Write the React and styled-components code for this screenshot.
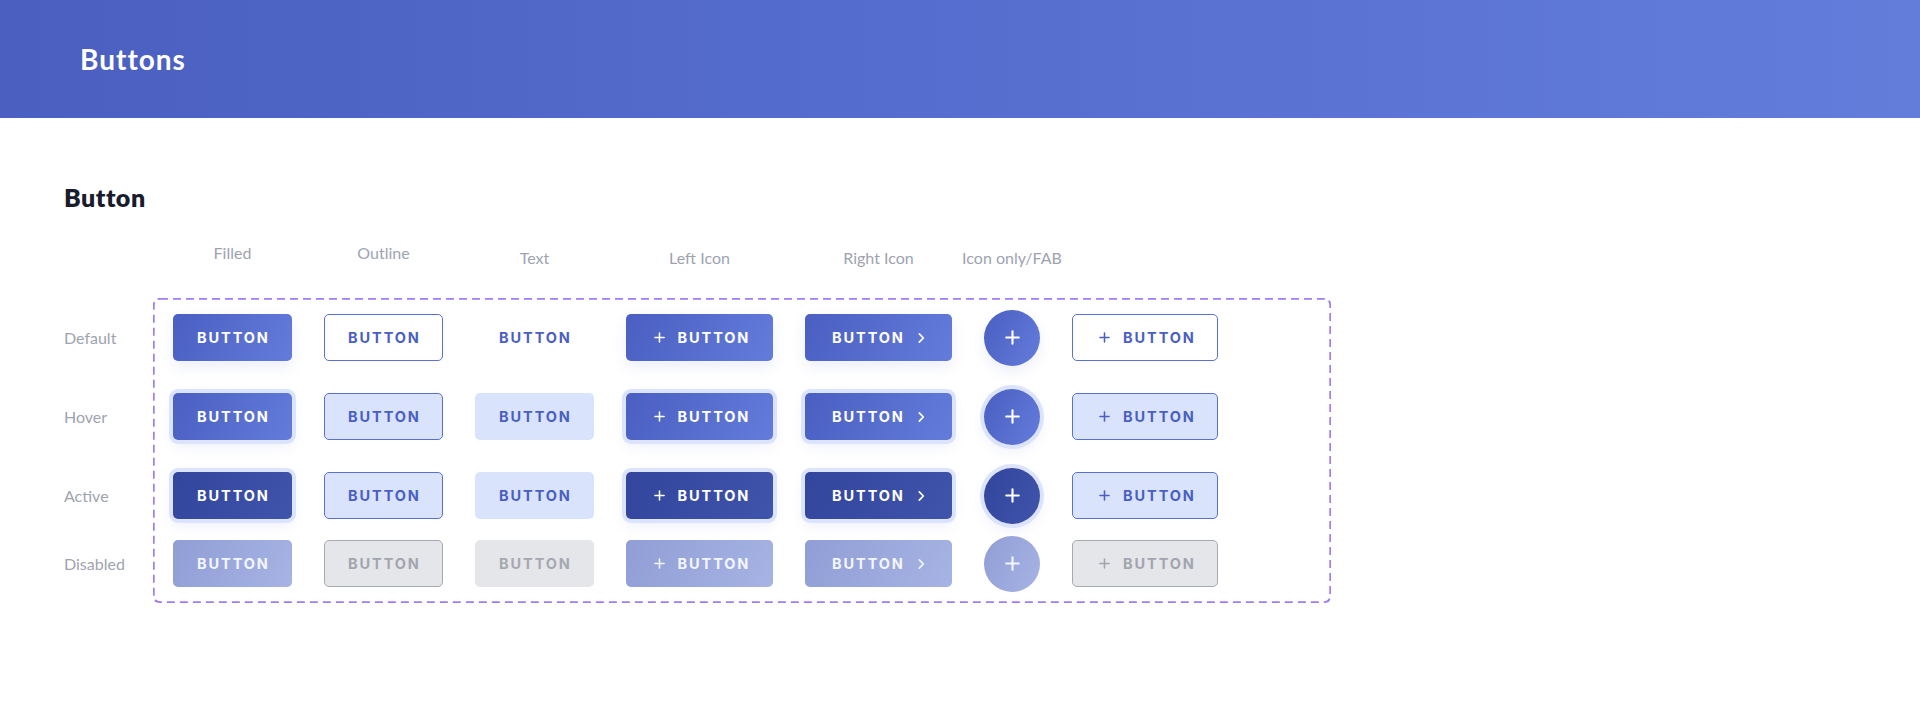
import React from "react";
import styled, { createGlobalStyle, css } from "styled-components";

const GlobalStyle = createGlobalStyle`
  * { box-sizing: border-box; }
  body {
    margin: 0;
    background: #ffffff;
    font-family: Lato, "Open Sans", sans-serif;
  }
`;

const PRIMARY = "linear-gradient(115deg, #4a5fc1 0%, #637cdb 100%)";
const PRIMARY_DARK = "linear-gradient(115deg, #33459c 0%, #3f54ab 100%)";
const PRIMARY_OFF = "linear-gradient(115deg, #909ed6 0%, #a6b3e3 100%)";
const SOFT = "#d9e3fb";
const RING = "0 0 0 4px #dbe4fc, 0 6px 14px rgba(74, 95, 193, 0.1)";
const LIFT = "0 6px 14px rgba(74, 95, 193, 0.1)";
const TRACK = 1.9;

const looks = {
  filled: {
    default: css`
      background: ${PRIMARY};
      color: #fff;
      box-shadow: ${LIFT};
    `,
    hover: css`
      background: ${PRIMARY};
      color: #fff;
      box-shadow: ${RING};
    `,
    active: css`
      background: ${PRIMARY_DARK};
      color: #fff;
      box-shadow: ${RING};
    `,
    disabled: css`
      background: ${PRIMARY_OFF};
      color: #f4f6ff;
    `,
  },
  outline: {
    default: css`
      background: #fff;
      color: #4a5fc1;
      border: 1.5px solid #5a70d3;
    `,
    hover: css`
      background: ${SOFT};
      color: #4a5fc1;
      border: 1.5px solid #5a70d3;
    `,
    active: css`
      background: ${SOFT};
      color: #4a5fc1;
      border: 1.5px solid #5a70d3;
    `,
    disabled: css`
      background: #e5e6ea;
      color: #a2a5ae;
      border: 1.5px solid #a6a9b1;
    `,
  },
  text: {
    default: css`
      background: transparent;
      color: #4a5fc1;
    `,
    hover: css`
      background: ${SOFT};
      color: #4a5fc1;
    `,
    active: css`
      background: ${SOFT};
      color: #4a5fc1;
    `,
    disabled: css`
      background: #e5e6ea;
      color: #a5a8b0;
    `,
  },
};

const columns = [
  { key: "filled", title: "Filled", kind: "filled", width: 119, lift: 0 },
  { key: "outline", title: "Outline", kind: "outline", width: 119, lift: 0 },
  { key: "text", title: "Text", kind: "text", width: 119, lift: 5 },
  { key: "left", title: "Left Icon", kind: "filled", icon: "left", width: 147, lift: 5 },
  { key: "right", title: "Right Icon", kind: "filled", icon: "right", width: 147, lift: 5 },
  { key: "fab", title: "Icon only/FAB", kind: "filled", icon: "fab", width: 56, lift: 5 },
  { key: "outlineIcon", title: "", kind: "outline", icon: "left", width: 146, lift: 5 },
];

const rows = [
  { state: "default", label: "Default", gap: 32 },
  { state: "hover", label: "Hover", gap: 32 },
  { state: "active", label: "Active", gap: 21 },
  { state: "disabled", label: "Disabled", gap: 0 },
];

function PlusIcon({ size = 11 }) {
  return (
    <svg width={size} height={size} viewBox="0 0 12 12" fill="none">
      <path d="M6 1v10M1 6h10" stroke="currentColor" strokeWidth="1.7" strokeLinecap="round" />
    </svg>
  );
}

function ChevronIcon() {
  return (
    <svg width="8" height="12" viewBox="0 0 8 12" fill="none">
      <path d="M2.3 1.8L6.3 6l-4 4.2" stroke="currentColor" strokeWidth="1.7" strokeLinecap="round" strokeLinejoin="round" />
    </svg>
  );
}

function DemoButton({ column, state }) {
  const { kind, icon, width } = column;
  if (icon === "fab") {
    return (
      <Fab $kind={kind} $state={state}>
        <PlusIcon size={15} />
      </Fab>
    );
  }
  return (
    <Btn $kind={kind} $state={state} $width={width} $icon={icon}>
      {icon === "left" && <PlusIcon />}
      <Label>BUTTON</Label>
      {icon === "right" && <ChevronIcon />}
    </Btn>
  );
}

export default function App() {
  return (
    <>
      <GlobalStyle />
      <Header>
        <HeaderTitle>Buttons</HeaderTitle>
      </Header>
      <Main>
        <SectionTitle>Button</SectionTitle>
        <ColumnHeads>
          {columns.map((c) => (
            <ColumnHead key={c.key} $width={c.width} $lift={c.lift}>
              {c.title}
            </ColumnHead>
          ))}
        </ColumnHeads>
        <Board>
          <RowLabels>
            {rows.map((r) => (
              <RowLabel key={r.state} $gap={r.gap}>
                {r.label}
              </RowLabel>
            ))}
          </RowLabels>
          <DashedBox>
            {rows.map((r) => (
              <ButtonRow key={r.state} $gap={r.gap}>
                {columns.map((c) => (
                  <DemoButton key={c.key} column={c} state={r.state} />
                ))}
              </ButtonRow>
            ))}
          </DashedBox>
        </Board>
      </Main>
    </>
  );
}

const Header = styled.header`
  height: 118px;
  display: flex;
  align-items: center;
  padding-left: 80px;
  background: linear-gradient(90deg, #4a5fc0 0%, #5770d0 55%, #637ddb 100%);
`;

const HeaderTitle = styled.h1`
  margin: 0;
  color: #fff;
  font-family: Lato, sans-serif;
  font-weight: 700;
  font-size: 28px;
  letter-spacing: 1px;
`;

const Main = styled.main`
  padding: 66px 64px 0;
`;

const SectionTitle = styled.h2`
  margin: 0;
  font-family: Lato, sans-serif;
  font-weight: 800;
  font-size: 25px;
  line-height: 26px;
  letter-spacing: 0.5px;
  color: #191c2c;
`;

const ColumnHeads = styled.div`
  display: flex;
  gap: 32px;
  height: 24px;
  margin-top: 34px;
  padding-left: 109px;
  align-items: flex-start;
`;

const ColumnHead = styled.div`
  width: ${(p) => p.$width}px;
  margin-top: ${(p) => p.$lift}px;
  display: flex;
  justify-content: center;
  white-space: nowrap;
  font-size: 16px;
  line-height: 18px;
  color: #9ea3b0;
`;

const Board = styled.div`
  display: flex;
  margin-top: 30px;
`;

const RowLabels = styled.div`
  width: 89px;
  padding-top: 16px;
  display: flex;
  flex-direction: column;
`;

const RowLabel = styled.div`
  height: 47px;
  margin-bottom: ${(p) => p.$gap}px;
  display: flex;
  align-items: center;
  font-size: 16px;
  color: #9ea3b0;
`;

const DashedBox = styled.div`
  width: 1178px;
  padding: 16px 20px;
  border-radius: 6px;
  display: flex;
  flex-direction: column;
  background-image: url("data:image/svg+xml,%3Csvg xmlns='http://www.w3.org/2000/svg' width='100%25' height='100%25'%3E%3Crect width='100%25' height='100%25' fill='none' rx='7' ry='7' stroke='%23a07cf6' stroke-width='3.4' stroke-dasharray='8%2c 5'/%3E%3C/svg%3E");
`;

const ButtonRow = styled.div`
  display: flex;
  gap: 32px;
  height: 47px;
  margin-bottom: ${(p) => p.$gap}px;
`;

const Btn = styled.div`
  width: ${(p) => p.$width}px;
  height: 47px;
  border-radius: 5px;
  display: flex;
  align-items: center;
  justify-content: center;
  gap: ${(p) => (p.$icon === "right" ? 14 : 13)}px;
  padding-left: ${(p) => (p.$icon === "left" ? 3 : 0)}px;
  font-family: Inter, "Liberation Sans", sans-serif;
  font-weight: 700;
  font-size: 14.5px;
  ${(p) => looks[p.$kind][p.$state]}
`;

const Label = styled.span`
  letter-spacing: ${TRACK}px;
  margin-right: -${TRACK}px;
  padding-top: 2px;
  line-height: 1;
`;

const Fab = styled.div`
  width: 56px;
  height: 56px;
  margin-top: -4.5px;
  border-radius: 50%;
  display: flex;
  align-items: center;
  justify-content: center;
  ${(p) => looks[p.$kind][p.$state]}
`;
